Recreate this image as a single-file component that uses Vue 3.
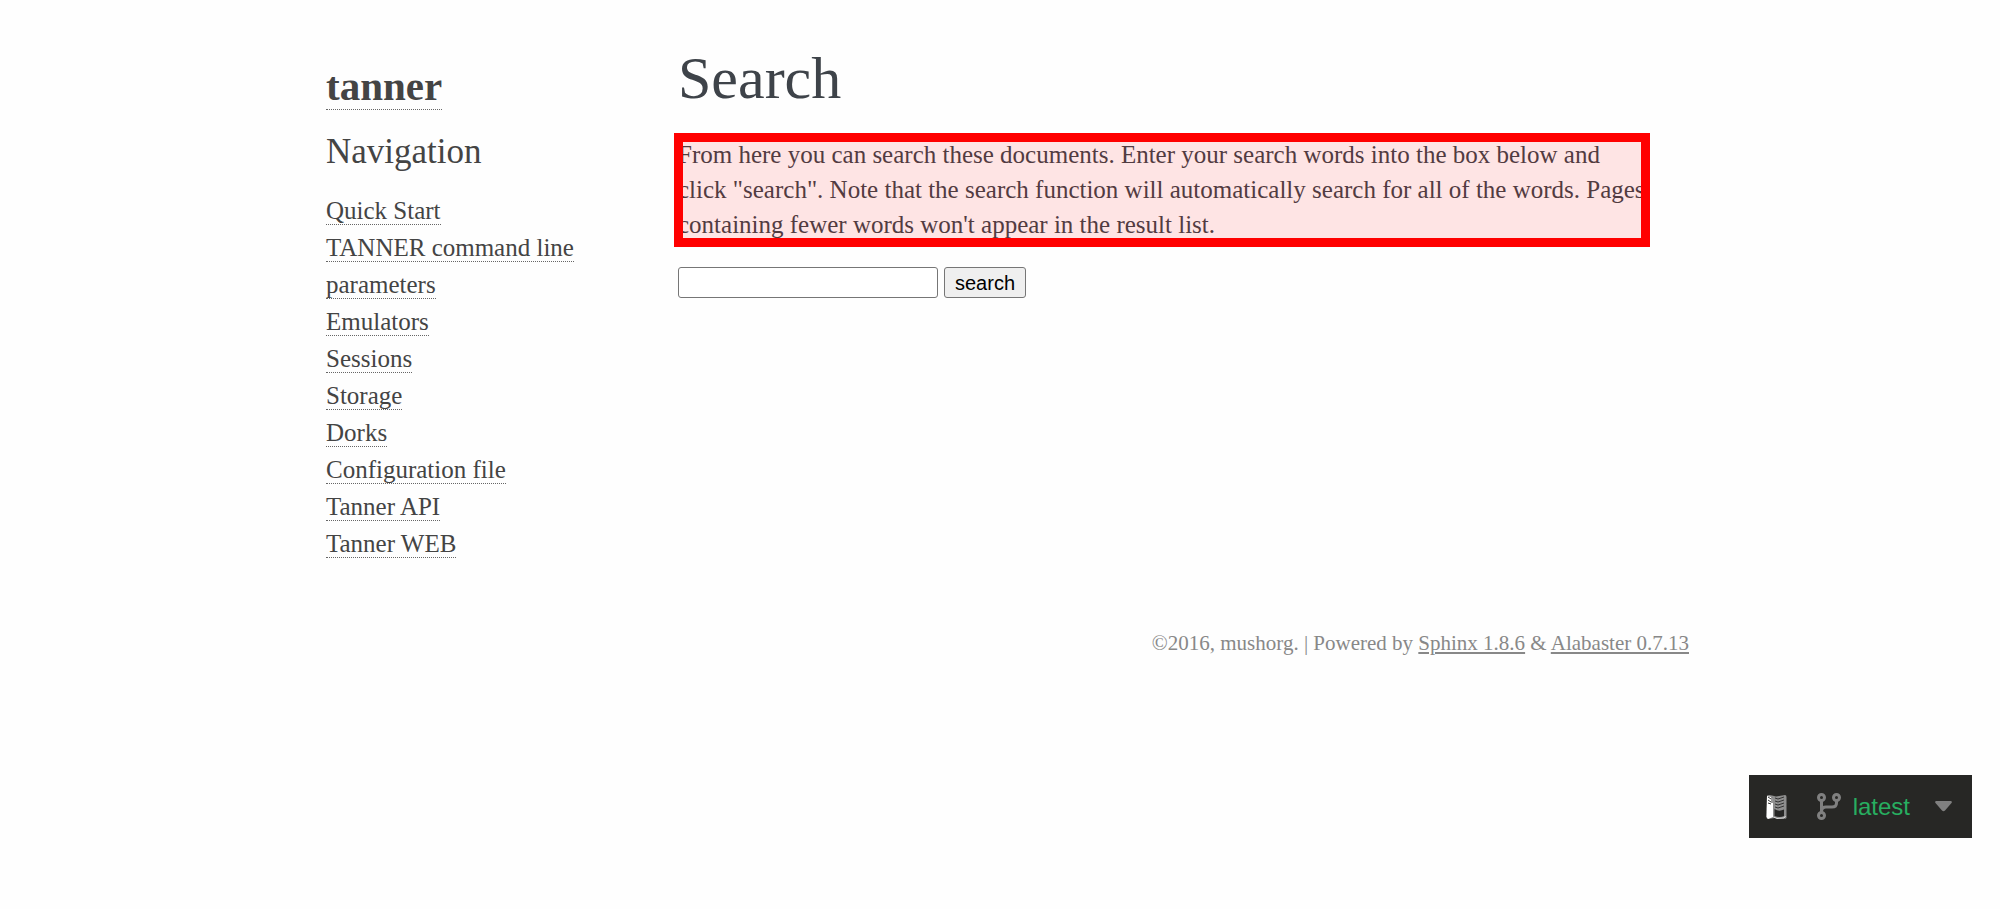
<script setup>
const links = [
  'Quick Start',
  'TANNER command line parameters',
  'Emulators',
  'Sessions',
  'Storage',
  'Dorks',
  'Configuration file',
  'Tanner API',
  'Tanner WEB',
]
</script>

<template>
  <div class="page">
    <div class="document">
      <aside class="sidebar">
        <h1 class="logo"><a href="#">tanner</a></h1>
        <h3>Navigation</h3>
        <nav>
          <ul>
            <li v-for="link in links" :key="link"><a href="#">{{ link }}</a></li>
          </ul>
        </nav>
      </aside>
      <main class="body">
        <h1>Search</h1>
        <p class="intro">
          From here you can search these documents. Enter your search words into the box below and click "search". Note that the search function will automatically search for all of the words. Pages containing fewer words won't appear in the result list.
          <span class="highlight"></span>
        </p>
        <form class="search" @submit.prevent>
          <input type="text" name="q" aria-label="Search terms" />
          <button type="submit">search</button>
        </form>
      </main>
    </div>
    <footer>
      ©2016, mushorg. | Powered by <a href="#">Sphinx 1.8.6</a> &amp; <a href="#">Alabaster 0.7.13</a>
    </footer>
    <button class="versions" type="button">
      <svg class="book" viewBox="0 0 21 26" aria-hidden="true">
        <path d="M1 1.500Q3 .5 6 1.500L10 2.500L19 1Q20.500 1 20.500 3V24Q20 25 18 24.500L9 24L2 25Q.5 25 .5 23Z" fill="#8e8e8e" />
        <path d="M1 2L7 3.500V23L2 25L.5 23Z" fill="#fff" />
        <path d="M8.500 15Q13 18 18 15.500V22Q14 24 8.500 22Z" fill="#262625" />
        <path d="M2 3L5 5M2 6L5 8M2 9L5 10M6 3V9M9 4L12 5L18 3M9 7L12 8L18 6M9 10L12 11L18 9M9 13L12 14L18 12" fill="none" stroke="#333" stroke-width="1" />
        <path d="M7.500 23L11 24.500L18 24L19.500 22" fill="none" stroke="#ddd" stroke-width="1" />
      </svg>
      <svg class="fork" viewBox="0 0 24 27" aria-hidden="true">
        <g fill="none" stroke="#808080" stroke-width="3">
          <circle cx="4.500" cy="4.500" r="3" />
          <circle cx="19.500" cy="4.500" r="3" />
          <circle cx="4.500" cy="22.500" r="3" />
          <path d="M4.500 7V20M19.500 7V10Q19.500 14 15 14H9Q5 14 4.500 18" />
        </g>
      </svg>
      <span>latest</span>
      <svg class="caret" viewBox="0 0 17 11" aria-hidden="true">
        <path d="M1 0H16Q17.500 .5 16.500 2L10 9.500Q8.500 11 7 9.500L.5 2Q-.5 .5 1 0Z" fill="#808080" />
      </svg>
    </button>
  </div>
</template>

<style>
body {
  margin: 0;
  background: #fefefe;
}
</style>

<style scoped>
.page {
  box-sizing: border-box;
  max-width: 1382px;
  margin: 0 auto;
  padding-top: 43px;
  color: #3e4349;
  font: 25px/35px "Liberation Serif", "Times New Roman", serif;
}
.document {
  display: flex;
}
.sidebar {
  box-sizing: border-box;
  flex: 0 0 324px;
  padding: 15px 18px 0 17px;
}
.sidebar,
.sidebar a {
  color: #444;
}
h1,
h3,
p,
ul {
  margin: 0;
  padding: 0;
  font-weight: 400;
}
.sidebar a {
  text-decoration: none;
  border-bottom: 1px dotted #666;
}
.logo {
  font-size: 41px;
  line-height: 56px;
  font-weight: 700;
}
h3 {
  margin-top: 15px;
  font-size: 35px;
  line-height: 46px;
}
ul {
  margin-top: 17px;
  list-style: none;
}
li {
  line-height: 37px;
}
.body {
  flex: 1;
  min-width: 0;
  padding: 0 45px;
}
.body h1 {
  font-size: 60px;
  line-height: 70px;
}
.intro {
  position: relative;
  margin-top: 24px;
}
.highlight {
  position: absolute;
  inset: -4px -4px -5px;
  border: 9px solid #f00;
  background: rgba(255, 0, 0, 0.1);
  background-clip: padding-box;
}
.search {
  display: flex;
  gap: 6px;
  margin-top: 25px;
}
.search input,
.search button {
  box-sizing: border-box;
  height: 31px;
  border: 1px solid #767676;
  border-radius: 3px;
  font: 20px/24px "Liberation Sans", Arial, sans-serif;
}
.search input {
  width: 260px;
  background: #fff;
}
.search button {
  width: 82px;
  padding: 0;
  background: #efefef;
  color: #000;
}
footer {
  margin: 66px 2px 0 0;
  color: #888;
  font-size: 21px;
  line-height: 30px;
  text-align: right;
}
footer a {
  color: #888;
}
.versions {
  position: fixed;
  right: 28px;
  bottom: 71px;
  display: flex;
  align-items: center;
  height: 63px;
  padding: 0 20px 0 17px;
  border: 0;
  background: #272725;
  color: #27ae60;
  font: 24px/30px "Liberation Sans", Arial, sans-serif;
}
.versions svg {
  flex: none;
}
.book {
  width: 21px;
  height: 26px;
  margin-right: 30px;
}
.fork {
  width: 24px;
  height: 27px;
  margin-right: 12px;
}
.caret {
  width: 17px;
  height: 11px;
  margin-left: 25px;
}
</style>
